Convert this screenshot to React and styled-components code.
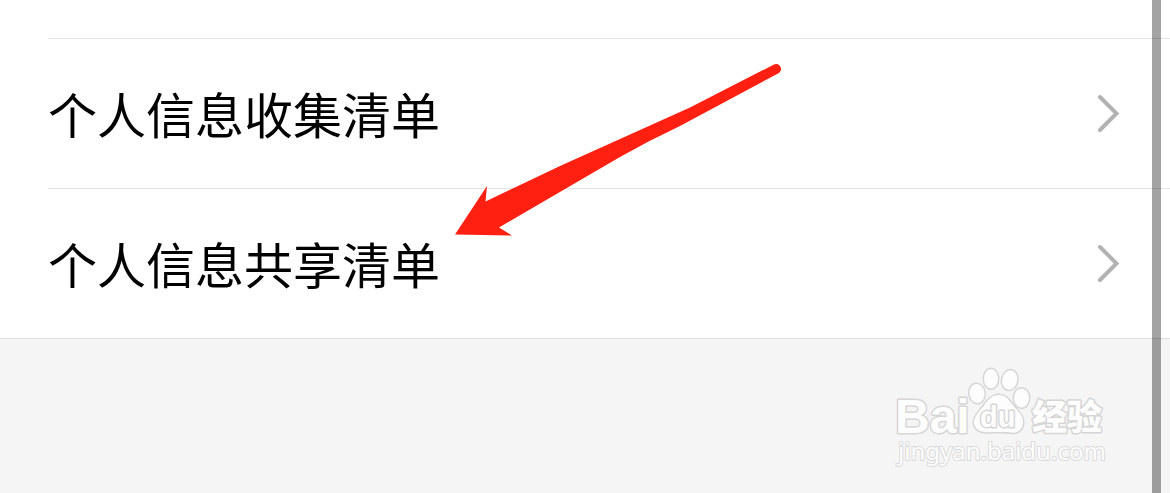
import React from "react";
import styled, { createGlobalStyle } from "styled-components";

const GlobalStyle = createGlobalStyle`
  * { box-sizing: border-box; }
  body {
    margin: 0;
    background: #f5f5f5;
    color: #000;
    font-family: "Noto Sans CJK SC", "Noto Sans", sans-serif;
  }
`;

const Page = styled.main`
  position: relative;
  min-height: 100vh;
  overflow: hidden;
`;

const List = styled.ul`
  margin: 0;
  padding: 38px 0 0 48px;
  list-style: none;
  background: #fff;
  border-bottom: 1px solid #dfdfdf;
`;

const Item = styled.li`
  border-top: 1px solid #e4e4e4;
`;

const RowLink = styled.a`
  display: flex;
  align-items: center;
  justify-content: space-between;
  height: 149px;
  padding: 0 48px 2px 0;
  color: inherit;
  text-decoration: none;
`;

const Label = styled.span`
  font-size: 49px;
  line-height: 72px;
`;

const Chevron = styled.svg`
  width: 26px;
  height: 42px;
  fill: none;
  stroke: #b2b2b2;
  stroke-width: 4;
  stroke-linecap: round;
`;

const ScrollTrack = styled.div`
  position: absolute;
  top: 0;
  bottom: 0;
  right: 9px;
  width: 9px;
  background: rgba(0, 0, 0, 0.36);
`;

const Arrow = styled.svg`
  position: absolute;
  left: 450px;
  top: 60px;
  width: 340px;
  height: 180px;
  fill: #ff2012;
  pointer-events: none;
`;

const Watermark = styled.div`
  position: absolute;
  right: 62px;
  bottom: 26px;
  width: 218px;
  display: flex;
  flex-direction: column;
`;

const Logo = styled.svg`
  width: 218px;
  height: 70px;
  overflow: visible;
  fill: #fdfdfd;
  stroke: #d6d6d6;
  stroke-width: 3;
  stroke-linejoin: round;
  paint-order: stroke;
`;

const LogoText = styled.text`
  font-family: ${(p) => (p.$cjk ? '"Noto Sans CJK SC"' : '"Liberation Sans"')}, sans-serif;
  font-weight: ${(p) => (p.$cjk ? 900 : 700)};
  font-size: ${(p) => p.$size}px;
`;

const SiteName = styled.span`
  padding-left: 8px;
  font-family: "Noto Sans", sans-serif;
  font-size: 24px;
  line-height: 32px;
  color: #fdfdfd;
  -webkit-text-stroke: 2px #dadada;
  paint-order: stroke;
`;

const rows = ["个人信息收集清单", "个人信息共享清单"];

export default function App() {
  return (
    <Page>
      <GlobalStyle />
      <List>
        {rows.map((label) => (
          <Item key={label}>
            <RowLink href="#">
              <Label>{label}</Label>
              <Chevron viewBox="0 0 26 42" aria-hidden="true">
                <path d="M4 5 20.500 21.500 4 38" />
              </Chevron>
            </RowLink>
          </Item>
        ))}
      </List>
      <ScrollTrack />
      <Arrow viewBox="450 60 340 180" aria-hidden="true">
        <path d="M455 234.500 487 186 485.500 201.500 560 166 690 107.500 774 64.500C779 62 784 69 779 73L680 126Q650 140 620 157L499 227.500 512 235.500Z" />
      </Arrow>
      <Watermark>
        <Logo viewBox="0 0 218 70" role="img" aria-label="Baidu">
          <LogoText x="5" y="68" $size={48}>Bai</LogoText>
          <ellipse cx="87" cy="28.500" rx="7.500" ry="9.500" transform="rotate(-8 87 28.500)" />
          <ellipse cx="101" cy="13.700" rx="7" ry="9.800" />
          <ellipse cx="119.700" cy="15" rx="7.500" ry="9.800" transform="rotate(12 119.700 15)" />
          <ellipse cx="131.500" cy="33" rx="7.500" ry="9.500" />
          <path d="M108.500 30C116 30 119 35 122 39C126 45 133 49 133 57C133 65 127 68.500 121 67.500C115 66.500 112 67 108 67C103 67 99 67.500 95 67C87 66.500 83 61 84 56C85 50 91 45 95 39C98 35 102 30 108.500 30Z" />
          <LogoText x="90" y="62" $size={29}>du</LogoText>
          <LogoText x="142" y="65" $size={35} $cjk>经验</LogoText>
        </Logo>
        <SiteName>jingyan.baidu.com</SiteName>
      </Watermark>
    </Page>
  );
}
